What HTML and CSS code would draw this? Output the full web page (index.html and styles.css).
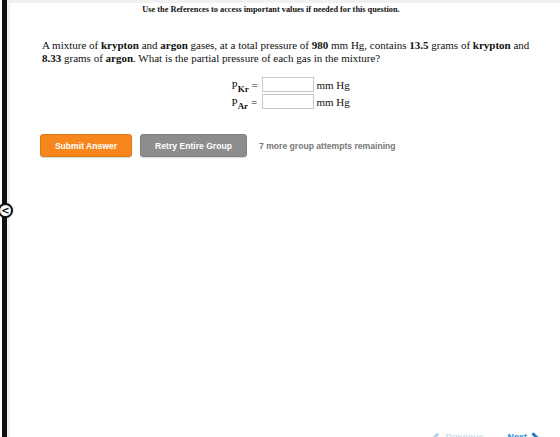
FILE: index.html
```html
<!DOCTYPE html>
<html>
<head>
<meta charset="utf-8">
<link rel="stylesheet" href="styles.css">
</head>
<body>
<div class="shell">
  <div class="rail">
    <button class="rail-toggle" type="button">&lt;</button>
  </div>
  <div class="gutter"></div>
  <div class="page">
    <div class="topband"></div>
    <p class="notice">Use the References to access important values if needed for this question.</p>
    <div class="question">
      <p class="prompt">A mixture of <b>krypton</b> and <b>argon</b> gases, at a total pressure of <b>980</b> mm Hg, contains <b>13.5</b> grams of <b>krypton</b> and <b>8.33</b> grams of <b>argon</b>. What is the partial pressure of each gas in the mixture?</p>
      <div class="answers">
        <div class="answer-row">
          <span class="label">P<sub>Kr</sub> =</span>
          <input class="field" type="text">
          <span class="unit">mm Hg</span>
        </div>
        <div class="answer-row">
          <span class="label">P<sub>Ar</sub> =</span>
          <input class="field" type="text">
          <span class="unit">mm Hg</span>
        </div>
      </div>
    </div>
    <div class="actions">
      <button class="btn btn-submit" type="button">Submit Answer</button>
      <button class="btn btn-retry" type="button">Retry Entire Group</button>
      <span class="attempts">7 more group attempts remaining</span>
    </div>
    <div class="spacer"></div>
    <div class="pager">
      <span class="prev"><span class="chev chev-left"></span>Previous</span>
      <span class="next">Next<span class="chev chev-right"></span></span>
    </div>
  </div>
</div>
</body>
</html>
```

FILE: styles.css
```css
html, body {
  margin: 0;
  padding: 0;
  height: 100%;
  background: #ffffff;
}

.shell {
  display: flex;
  height: 437px;
  overflow: hidden;
}

.rail {
  position: relative;
  width: 2px;
  flex: none;
  background: #ffffff;
  border-right: 5px solid #111111;
}

.rail-toggle {
  position: absolute;
  left: -2px;
  top: 203px;
  width: 15px;
  height: 15px;
  padding: 0;
  border: 2px solid #111111;
  border-radius: 50%;
  background: #ffffff;
  color: #111111;
  font: bold 10px/10px "DejaVu Sans", sans-serif;
  text-align: center;
  box-shadow: 0 0 2px rgba(0,0,0,0.4);
}

.gutter {
  width: 3px;
  flex: none;
  background: #f1f1f1;
}

.page {
  flex: 1;
  display: flex;
  flex-direction: column;
  font-family: "Liberation Serif", "Times New Roman", serif;
  color: #111111;
}

.topband {
  height: 3px;
  background: #f1f1f1;
}

.notice {
  margin: 1px 0 0;
  text-align: center;
  font-weight: bold;
  font-size: 8.3px;
  line-height: 12px;
  padding-right: 28px;
}

.question {
  padding: 23px 16px 0 32px;
}

.prompt {
  margin: 0;
  font-size: 11px;
  line-height: 13px;
}

.answers {
  display: flex;
  flex-direction: column;
  align-items: center;
  gap: 2px;
  margin-top: 12px;
  padding-left: 2px;
}

.answer-row {
  display: flex;
  align-items: center;
  height: 15px;
  font-size: 11px;
}

.label {
  width: 30px;
  white-space: nowrap;
}

.label sub {
  font-weight: bold;
  font-size: 9px;
  vertical-align: -3px;
  line-height: 0;
}

.field {
  box-sizing: border-box;
  width: 52px;
  height: 15px;
  margin: 0 3px 0 0;
  border: 1px solid #c9c9c9;
  background: #ffffff;
}

.unit {
  width: 40px;
}

.actions {
  display: flex;
  align-items: center;
  gap: 8px;
  margin-top: 25px;
  padding-left: 30px;
}

.btn {
  height: 23px;
  border-radius: 3px;
  color: #ffffff;
  font: bold 8.6px "Liberation Sans", Arial, sans-serif;
  padding: 0 0;
  box-shadow: 0 1px 1px rgba(0,0,0,0.15);
}

.btn-submit {
  width: 92px;
  background: #f7861f;
  border: 1px solid #e07812;
}

.btn-retry {
  width: 107px;
  background: #8d8d8d;
  border: 1px solid #808080;
}

.attempts {
  margin-left: 4px;
  font: bold 8.6px "Liberation Sans", Arial, sans-serif;
  color: #777777;
}

.spacer {
  flex: 1;
}

.pager {
  display: flex;
  justify-content: flex-end;
  gap: 24px;
  height: 6px;
  padding-right: 22px;
  font: bold 9px "Liberation Sans", Arial, sans-serif;
  line-height: 12px;
  overflow: visible;
}

.prev {
  color: #c5def0;
  display: flex;
  align-items: flex-start;
}

.next {
  color: #2a8ad0;
  display: flex;
  align-items: flex-start;
}

.chev {
  display: inline-block;
  width: 6px;
  height: 6px;
  border-top: 3px solid currentColor;
  margin-top: 3px;
}

.chev-left {
  border-left: 3px solid currentColor;
  transform: rotate(-45deg) skewX(10deg);
  margin-right: 3px;
  color: #b7d7ef;
}

.chev-right {
  border-right: 3px solid currentColor;
  transform: rotate(45deg);
  margin-left: 2px;
  color: #1f7fc6;
}
```
